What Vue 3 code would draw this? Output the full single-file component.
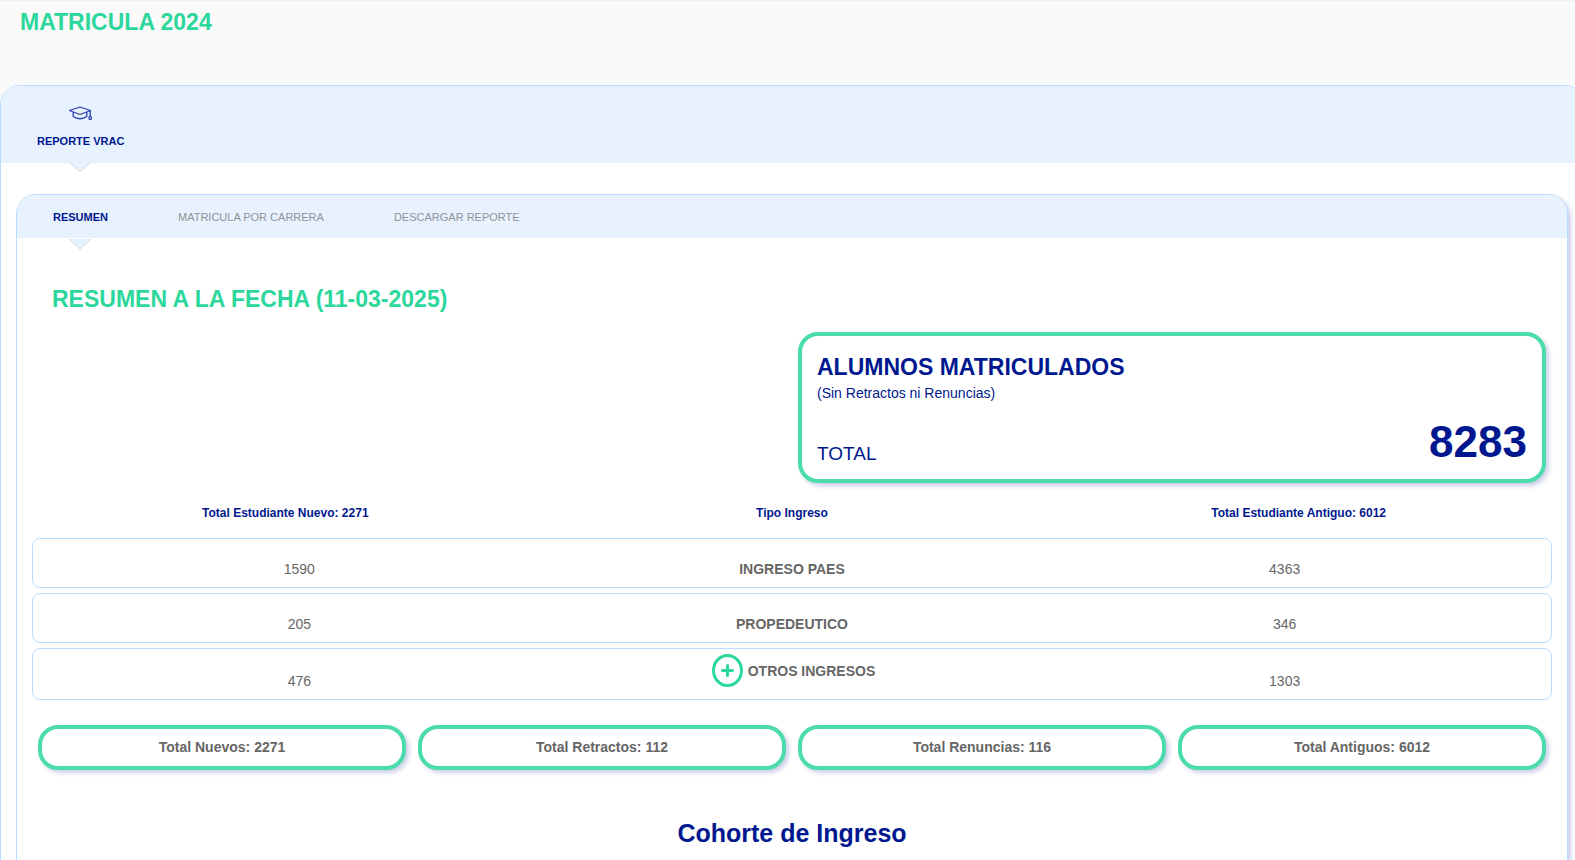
<script setup>
const sections = [{ id: 'vrac', label: 'REPORTE VRAC' }]

const tabs = [
  { id: 'resumen', label: 'RESUMEN', active: true },
  { id: 'carrera', label: 'MATRICULA POR CARRERA', active: false },
  { id: 'descargar', label: 'DESCARGAR REPORTE', active: false },
]

const headers = ['Total Estudiante Nuevo: 2271', 'Tipo Ingreso', 'Total Estudiante Antiguo: 6012']

const rows = [
  { nuevos: 1590, tipo: 'INGRESO PAES', antiguos: 4363 },
  { nuevos: 205, tipo: 'PROPEDEUTICO', antiguos: 346 },
  { nuevos: 476, tipo: 'OTROS INGRESOS', antiguos: 1303, expandable: true },
]

const totals = ['Total Nuevos: 2271', 'Total Retractos: 112', 'Total Renuncias: 116', 'Total Antiguos: 6012']
</script>

<template>
  <div class="page">
    <header class="page-header">
      <h1 class="title">MATRICULA 2024</h1>
    </header>

    <main class="panel">
      <nav class="sections" aria-label="Reportes">
        <button v-for="s in sections" :key="s.id" type="button" class="section">
          <svg class="cap" viewBox="0 0 24 16" aria-hidden="true">
            <path d="M0.500 4.500 11 1 21.500 4.500 11 8.500z" />
            <path d="M4.200 6V10.500Q11 15 17.800 10.500V6" />
            <path d="M21.200 4.500V10.500" />
            <ellipse cx="21.200" cy="12" rx="1.200" ry="1.600" />
          </svg>
          <span>{{ s.label }}</span>
          <svg class="pointer" viewBox="0 0 22 11" aria-hidden="true">
            <path d="M0 0 11 10 22 0" />
          </svg>
        </button>
      </nav>

      <section class="card">
        <nav class="tabs" aria-label="Vistas del reporte">
          <button v-for="t in tabs" :key="t.id" type="button" class="tab" :class="{ active: t.active }">
            {{ t.label }}
            <svg v-if="t.active" class="pointer below" viewBox="0 0 22 11" aria-hidden="true">
              <path d="M0 0 11 10 22 0" />
            </svg>
          </button>
        </nav>

        <div class="content">
          <h2 class="title subtitle">RESUMEN A LA FECHA (11-03-2025)</h2>

          <div class="summary-grid">
            <article class="box summary">
              <h3>ALUMNOS MATRICULADOS</h3>
              <p class="note">(Sin Retractos ni Renuncias)</p>
              <div class="total">
                <span class="total-label">TOTAL</span>
                <strong>8283</strong>
              </div>
            </article>
          </div>

          <table class="types">
            <thead>
              <tr>
                <th v-for="h in headers" :key="h" scope="col">{{ h }}</th>
              </tr>
            </thead>
            <tbody>
              <tr v-for="r in rows" :key="r.tipo">
                <td>{{ r.nuevos }}</td>
                <td class="type" :class="{ raised: r.expandable }">
                  <button v-if="r.expandable" type="button" class="expand">
                    <svg class="plus" viewBox="0 0 31 33" aria-hidden="true">
                      <ellipse cx="15.500" cy="16.500" rx="14" ry="15" />
                      <path d="M10.500 16.500H20.500M15.500 11.500V21.500" />
                    </svg>
                    <span>{{ r.tipo }}</span>
                  </button>
                  <template v-else>{{ r.tipo }}</template>
                </td>
                <td>{{ r.antiguos }}</td>
              </tr>
            </tbody>
          </table>

          <div class="totals">
            <div v-for="t in totals" :key="t" class="box chip">{{ t }}</div>
          </div>

          <h2 class="cohort">Cohorte de Ingreso</h2>
        </div>
      </section>
    </main>
  </div>
</template>

<style>
body {
  background: #fafafa;
  overflow-x: hidden;
}
body::-webkit-scrollbar {
  display: none;
}
</style>

<style scoped>
.page {
  font-family: "Liberation Sans", Arial, sans-serif;
  font-size: 14px;
  line-height: 20px;
  color: #666;
  border-top: 1px solid #f2f2f2;
}
.page * {
  box-sizing: border-box;
}
h1, h2, h3, p {
  margin: 0;
}
button {
  font: inherit;
  color: inherit;
  background: none;
  border: 0;
  padding: 0;
  cursor: pointer;
}
.page-header {
  padding: 7px 20px 49px;
}
.title {
  font-size: 23px;
  line-height: 28px;
  color: #2cd79c;
}
.panel {
  margin-right: -10px;
  background: #fff;
  border: 1px solid #b8dcff;
  border-radius: 20px 20px 0 0;
}
.sections {
  display: flex;
  padding: 0 36px;
  background: #e8f2ff;
  border-radius: 19px 19px 0 0;
}
.section {
  position: relative;
  display: flex;
  flex-direction: column;
  align-items: center;
  gap: 11px;
  padding: 20px 0 14px;
  font-size: 11px;
  line-height: 16px;
  font-weight: 700;
  color: #00188f;
}
.cap {
  width: 24px;
  height: 16px;
  fill: none;
  stroke: #2a3fa8;
  stroke-width: 1.3;
  stroke-linejoin: round;
}
.pointer {
  position: absolute;
  top: 100%;
  left: 50%;
  width: 22px;
  height: 11px;
  margin: -1px 0 0 -12px;
  fill: #e8f2ff;
  stroke: #d3d8e0;
}
.pointer.below {
  margin-top: 1px;
}
.card {
  margin: 31px 16px 0 15px;
  background: #fff;
  border: 1px solid #b8dcff;
  border-radius: 20px;
  box-shadow: 3px 3px 4px rgba(0, 24, 143, 0.2);
}
.tabs {
  display: flex;
  gap: 70px;
  padding: 0 36px;
  background: #e8f2ff;
  border-radius: 19px 19px 0 0;
}
.tab {
  position: relative;
  padding: 14px 0 13px;
  font-size: 11px;
  line-height: 16px;
  color: #8f9296;
}
.tab.active {
  font-weight: 700;
  color: #00188f;
}
.content {
  padding: 47px 15px 64px;
}
.subtitle {
  padding-left: 20px;
}
.summary-grid {
  display: grid;
  grid-template-columns: 1fr 1fr;
  gap: 12px;
  padding: 19px 6px 0;
}
.box {
  background: #fff;
  border: 4px solid #4adcaa;
  border-radius: 20px;
  box-shadow: 3px 3px 4px rgba(0, 24, 143, 0.2);
}
.summary {
  grid-column: 2;
  padding: 17px 15px 13px;
  color: #00188f;
}
.summary h3 {
  font-size: 23px;
  line-height: 28px;
}
.note {
  padding-top: 2px;
}
.total {
  display: flex;
  justify-content: space-between;
  align-items: flex-end;
  margin-top: 15px;
}
.total-label {
  font-size: 19px;
  line-height: 24px;
}
.total strong {
  font-size: 44px;
  line-height: 48px;
}
.types {
  display: block;
  margin-top: 20px;
}
.types thead {
  display: block;
}
.types tbody {
  display: flex;
  flex-direction: column;
  gap: 5px;
}
.types tr {
  display: grid;
  grid-template-columns: repeat(3, 1fr);
}
.types th {
  padding: 0 0 15px;
  font-size: 12px;
  line-height: 20px;
  color: #00188f;
}
.types tbody tr {
  align-items: end;
  min-height: 50px;
  padding: 5px 20px 8px;
  border: 1px solid #b8dcff;
  border-radius: 8px;
}
.types td {
  padding: 0;
  text-align: center;
}
.type {
  font-weight: 700;
}
.types .raised {
  padding-bottom: 4px;
}
.expand {
  display: inline-flex;
  align-items: center;
  gap: 5px;
  padding-left: 3px;
  vertical-align: top;
}
.plus {
  width: 31px;
  height: 33px;
  fill: none;
  stroke: #2cd79c;
  stroke-width: 3;
  stroke-linecap: round;
}
.totals {
  display: grid;
  grid-template-columns: repeat(4, 1fr);
  gap: 12px;
  padding: 25px 6px 0;
}
.chip {
  padding: 8px 0 9px;
  text-align: center;
  font-weight: 700;
}
.cohort {
  margin-top: 48px;
  text-align: center;
  font-size: 25px;
  line-height: 30px;
  color: #00188f;
}
</style>
